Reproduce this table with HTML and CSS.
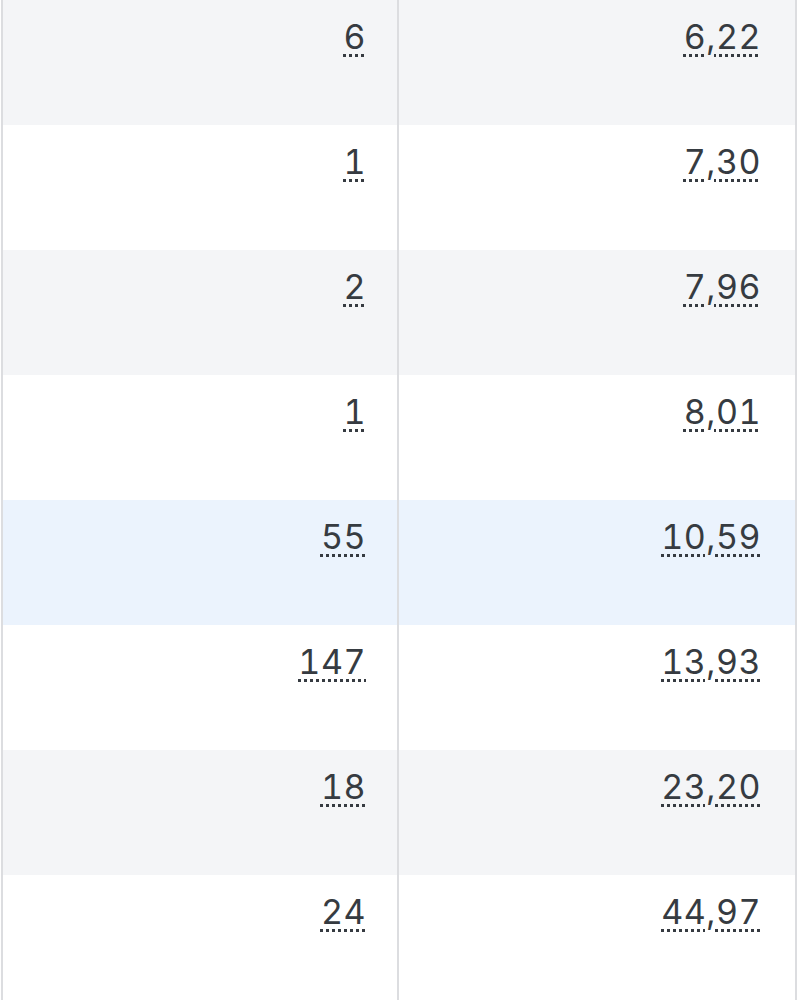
FILE: index.html
```html
<!DOCTYPE html>
<html lang="de">
<head>
<meta charset="utf-8">
<title>Tabelle</title>
<link rel="stylesheet" href="styles.css">
</head>
<body>
<div class="table">
  <div class="row row-gray"><div class="cell"><abbr class="num">6</abbr></div><div class="cell"><abbr class="num">6,22</abbr></div></div>
  <div class="row"><div class="cell"><abbr class="num">1</abbr></div><div class="cell"><abbr class="num">7,30</abbr></div></div>
  <div class="row row-gray"><div class="cell"><abbr class="num">2</abbr></div><div class="cell"><abbr class="num">7,96</abbr></div></div>
  <div class="row"><div class="cell"><abbr class="num">1</abbr></div><div class="cell"><abbr class="num">8,01</abbr></div></div>
  <div class="row row-blue"><div class="cell"><abbr class="num">55</abbr></div><div class="cell"><abbr class="num">10,59</abbr></div></div>
  <div class="row"><div class="cell"><abbr class="num">147</abbr></div><div class="cell"><abbr class="num">13,93</abbr></div></div>
  <div class="row row-gray"><div class="cell"><abbr class="num">18</abbr></div><div class="cell"><abbr class="num">23,20</abbr></div></div>
  <div class="row"><div class="cell"><abbr class="num">24</abbr></div><div class="cell"><abbr class="num">44,97</abbr></div></div>
</div>
</body>
</html>
```
FILE: styles.css
```css
html, body {
  margin: 0;
  padding: 0;
  background: #ffffff;
}
body {
  font-family: Inter, "Noto Sans", sans-serif;
  color: #363b41;
  overflow: hidden;
}
.table {
  margin-left: 1px;
  width: 796px;
  display: flex;
  flex-direction: column;
}
.row {
  display: grid;
  grid-template-columns: 398px 398px;
  height: 125px;
  background: #ffffff;
}
.row-gray { background: #f4f5f7; }
.row-blue { background: #ebf3fd; }
.cell {
  box-sizing: border-box;
  text-align: right;
  padding: 17px 34px 0 0;
  border-right: 2px solid #dcdde0;
  font-size: 34px;
  line-height: 40px;
}
.cell:first-child {
  border-left: 2px solid #dcdde0;
  padding-right: 31px;
}
.num {
  font-variant-numeric: tabular-nums;
  letter-spacing: 0.5px;
  text-decoration: underline dotted #363b41;
  text-decoration-thickness: 3px;
  text-underline-offset: 5px;
}
```
